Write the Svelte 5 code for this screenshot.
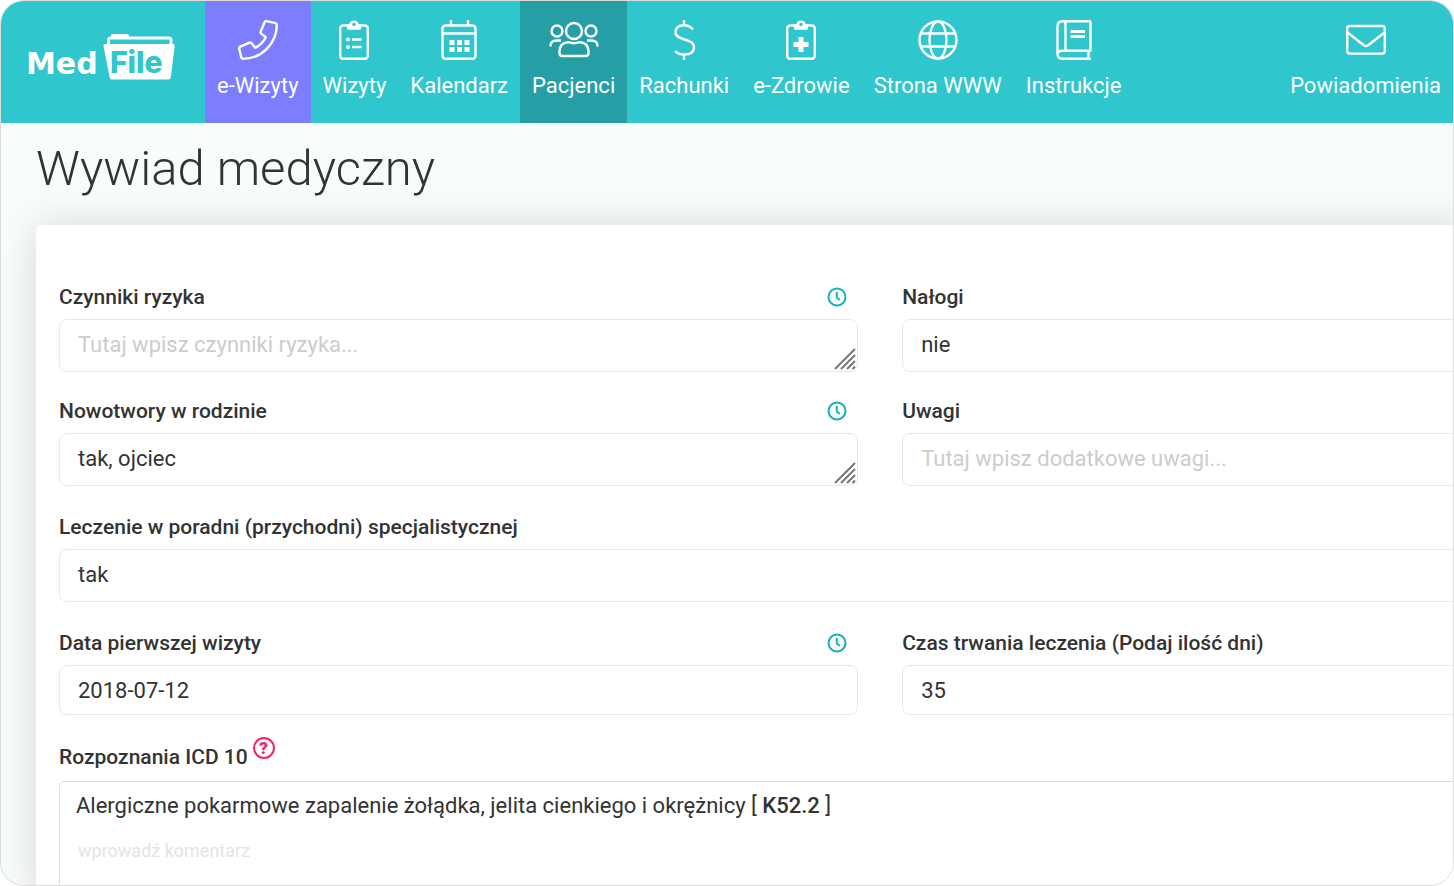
<script lang="ts">
	type IconName =
		| 'phone'
		| 'list'
		| 'calendar'
		| 'people'
		| 'dollar'
		| 'health'
		| 'globe'
		| 'book'
		| 'mail';

	interface NavItem {
		label: string;
		icon: IconName;
		width: number;
		variant?: 'call' | 'active' | 'last';
	}

	const navItems: NavItem[] = [
		{ label: 'e-Wizyty', icon: 'phone', width: 40, variant: 'call' },
		{ label: 'Wizyty', icon: 'list', width: 30 },
		{ label: 'Kalendarz', icon: 'calendar', width: 36 },
		{ label: 'Pacjenci', icon: 'people', width: 50, variant: 'active' },
		{ label: 'Rachunki', icon: 'dollar', width: 22 },
		{ label: 'e-Zdrowie', icon: 'health', width: 30 },
		{ label: 'Strona WWW', icon: 'globe', width: 40 },
		{ label: 'Instrukcje', icon: 'book', width: 36 },
		{ label: 'Powiadomienia', icon: 'mail', width: 40, variant: 'last' }
	];

	let riskFactors = $state('');
	let addictions = $state('nie');
	let familyCancer = $state('tak, ojciec');
	let remarks = $state('');
	let clinic = $state('tak');
	let firstVisit = $state('2018-07-12');
	let duration = $state('35');
	let comment = $state('');
</script>

{#snippet clipboard()}
	<rect x="1.2" y="5.5" width="27.6" height="33.3" rx="3" />
	<path class="solid" d="M8 4.5h2.200a4.900 4.900 0 0 1 9.600 0H22v3.700q0 1.600-1.600 1.600H9.600q-1.600 0-1.600-1.600z" />
	<circle class="hole" cx="15" cy="4.500" r="1.700" />
{/snippet}

{#snippet history(field: string)}
	<button type="button" class="history" aria-label={`Historia: ${field}`}>
		<svg viewBox="0 0 20 20" width="20" height="20" aria-hidden="true">
			<circle cx="10" cy="10" r="8.500" />
			<path d="M9.800 5v5.500l3 2.500" />
		</svg>
	</button>
{/snippet}

{#snippet grip()}
	<svg class="grip" viewBox="0 0 22 22" width="22" height="22" aria-hidden="true">
		<path d="M1 21 21 1M7 21 21 7M13 21l8-8M18.500 21l2.500-2.500" />
	</svg>
{/snippet}

<div class="window">
	<header class="topbar">
		<a class="logo" href="#start" aria-label="MedFile">
			<svg viewBox="0 0 150 56" width="150" height="56">
				<text class="med" x="-1" y="43">Med</text>
				<path class="folder-back" d="M81.500 14V9q0-2 2-2h58.500q2 0 2 2v5" />
				<path
					class="folder"
					d="M84 8V5q0-2 2-2h14q2 0 2 2v3zM78 13h68q2 0 1.700 2l-4 31.500q-.3 2-2.300 2H85q-2 0-2.300-2l-6.200-31.500q-.300-2 1.500-2z"
				/>
				<text class="file" x="83" y="42">File</text>
			</svg>
		</a>
		<nav aria-label="Menu główne">
			{#each navItems as item (item.label)}
				<a
					href={`#${item.icon}`}
					class={item.variant}
					aria-current={item.variant === 'active' ? 'page' : undefined}
				>
					<svg viewBox={`0 0 ${item.width} 40`} width={item.width} height="40" aria-hidden="true">
						{#if item.icon === 'phone'}
							<path
								d="M28.500 1.200l9 2q1.300.4 1.300 1.800c0 18.500-15.300 33.800-33.800 33.800q-1.400 0-1.800-1.400l-2-8.800q-.3-1.400 1-2l9.300-3.900q1.200-.5 2.100.5l3.700 4.600c4.700-2.300 8.200-5.800 10.500-10.500l-4.600-3.700q-1-.9-.5-2.100l3.900-9.300q.600-1.300 1.900-1z"
							/>
						{:else if item.icon === 'list'}
							{@render clipboard()}
							<path d="M13 19.500h9.500M13 27h9.500" />
							<circle class="solid" cx="9" cy="19.500" r="2" />
							<circle class="solid" cx="9" cy="27" r="2" />
						{:else if item.icon === 'calendar'}
							<rect x="1.500" y="5.500" width="33" height="33.300" rx="3" />
							<path d="M10 0v5M27 0v5M2 13.500h32" />
							<path
								class="solid"
								d="M8.500 20h5v5h-5zM16 20h5v5h-5zM23.500 20h5v5h-5zM8.500 27h5v5h-5zM16 27h5v5h-5zM23.500 27h5v5h-5z"
							/>
						{:else if item.icon === 'people'}
							<circle cx="25" cy="11" r="8" />
							<circle cx="8" cy="11" r="5.500" />
							<circle cx="42" cy="11" r="5.500" />
							<path d="M1.500 26.500v-.5q0-5.500 6-5.500h4.500M48.500 26.500v-.5q0-5.500-6-5.500H38" />
							<path
								d="M19.500 22.200q5.500 2 11 0 8.500 0 9 9v2q0 2.800-3 2.800h-23q-3 0-3-2.800v-2q.5-9 9-9z"
							/>
						{:else if item.icon === 'dollar'}
							<path
								d="M11 0v5M11 35v5M20 9.500q-3.500-4.300-9-4.300-8.500 0-8.500 7.300c0 8.500 18.500 5.500 18.500 14.500q0 7.500-9.500 7.500-6.500 0-9.500-3.500"
							/>
						{:else if item.icon === 'health'}
							{@render clipboard()}
							<path class="solid" d="M12.500 17h5v5h5v5h-5v5h-5v-5h-5v-5h5z" />
						{:else if item.icon === 'globe'}
							<circle cx="20" cy="20" r="18.500" />
							<ellipse cx="20" cy="20" rx="8.500" ry="18.500" />
							<path d="M2.500 13.500h35M2.500 26.500h35" />
						{:else if item.icon === 'book'}
							<path d="M35 1.200H6.500q-5 0-5 5v27.600q0 5 5 5H35M34.500 1.200v29.500H6.500q-5 0-5 4M9.500 1.200v29.500M32.500 31v7.500" />
							<path class="heavy" d="M14.500 11.500h14.500M14.500 16.500h14.500" />
						{:else}
							<rect x="1.200" y="6" width="37.600" height="27.600" rx="2.500" />
							<path d="M1.500 12.500 17.500 25q2.500 2 5 0l16-12.500" />
						{/if}
					</svg>
					<span>{item.label}</span>
				</a>
			{/each}
		</nav>
	</header>

	<main>
		<h1>Wywiad medyczny</h1>

		<form class="panel">
			<div class="row tight">
				<div class="field">
					<div class="caption">
						<label for="risk">Czynniki ryzyka</label>
						{@render history('Czynniki ryzyka')}
					</div>
					<div class="area">
						<textarea id="risk" rows="1" placeholder="Tutaj wpisz czynniki ryzyka..." bind:value={riskFactors}></textarea>
						{@render grip()}
					</div>
				</div>
				<div class="field">
					<div class="caption"><label for="addictions">Nałogi</label></div>
					<textarea id="addictions" rows="1" bind:value={addictions}></textarea>
				</div>
			</div>

			<div class="row">
				<div class="field">
					<div class="caption">
						<label for="cancer">Nowotwory w rodzinie</label>
						{@render history('Nowotwory w rodzinie')}
					</div>
					<div class="area">
						<textarea id="cancer" rows="1" bind:value={familyCancer}></textarea>
						{@render grip()}
					</div>
				</div>
				<div class="field">
					<div class="caption"><label for="remarks">Uwagi</label></div>
					<textarea id="remarks" rows="1" placeholder="Tutaj wpisz dodatkowe uwagi..." bind:value={remarks}></textarea>
				</div>
			</div>

			<div class="row wide">
				<div class="field">
					<div class="caption">
						<label for="clinic">Leczenie w poradni (przychodni) specjalistycznej</label>
					</div>
					<textarea id="clinic" rows="1" bind:value={clinic}></textarea>
				</div>
			</div>

			<div class="row">
				<div class="field">
					<div class="caption">
						<label for="first-visit">Data pierwszej wizyty</label>
						{@render history('Data pierwszej wizyty')}
					</div>
					<input id="first-visit" type="text" bind:value={firstVisit} />
				</div>
				<div class="field">
					<div class="caption">
						<label for="duration">Czas trwania leczenia (Podaj ilość dni)</label>
					</div>
					<input id="duration" type="text" bind:value={duration} />
				</div>
			</div>

			<div class="field">
				<div class="caption help">
					<label for="icd-comment">Rozpoznania ICD 10</label>
					<button type="button" class="hint" aria-label="Pomoc">?</button>
				</div>
				<div class="diagnosis">
					<p>Alergiczne pokarmowe zapalenie żołądka, jelita cienkiego i okrężnicy [ <b>K52.2</b> ]</p>
					<input id="icd-comment" type="text" placeholder="wprowadź komentarz" bind:value={comment} />
				</div>
			</div>
		</form>
	</main>
</div>

<style>
	:global(body) {
		background: #fff;
	}

	.window {
		box-sizing: border-box;
		height: 100vh;
		display: flex;
		flex-direction: column;
		overflow: hidden;
		border: 1px solid #dcdcdc;
		border-radius: 24px;
		background: #f8fcfd;
		color: #333;
		font-family: Roboto, sans-serif;
		font-size: 22px;
	}

	.topbar {
		flex: none;
		display: flex;
		background: #30c6ce;
	}

	.logo {
		display: block;
		padding: 30px 28px 0 26px;
	}

	.logo svg {
		display: block;
		overflow: visible;
	}

	.med,
	.folder {
		fill: #fff;
	}

	.med {
		font: 700 30px 'DejaVu Sans', sans-serif;
	}

	.file {
		fill: #30c6ce;
		font: 800 30px Inter, sans-serif;
	}

	.folder-back {
		fill: none;
		stroke: #fff;
		stroke-width: 3;
	}

	nav {
		flex: 1;
		display: flex;
	}

	nav a {
		display: flex;
		flex-direction: column;
		align-items: center;
		gap: 10px;
		padding: 19px 12px 22px;
		color: #fff;
		line-height: 31px;
		text-decoration: none;
		white-space: nowrap;
	}

	nav a.call {
		background: #7d7dff;
	}

	nav a.active {
		background: #269ea5;
	}

	nav a.last {
		margin-left: auto;
	}

	nav svg {
		fill: none;
		stroke: #fff;
		stroke-width: 2.4;
		stroke-linejoin: round;
	}

	nav svg .solid {
		fill: #fff;
		stroke: none;
	}

	nav svg .hole {
		fill: #30c6ce;
		stroke: none;
	}

	nav svg .heavy {
		stroke-width: 3;
	}

	main {
		flex: 1;
		min-height: 0;
		display: flex;
		flex-direction: column;
		padding-left: 35px;
	}

	h1 {
		margin: 0;
		padding: 14px 0 24px;
		font-size: 49px;
		font-weight: 300;
		line-height: 64px;
	}

	.panel {
		flex: 1 0 auto;
		margin-right: -20px;
		padding: 54px 0 0 23px;
		border-radius: 5px 0 0;
		background: #fff;
		box-shadow: 0 0 40px rgb(0 0 0 / 14%);
	}

	.row {
		min-height: 116px;
		display: grid;
		grid-template-columns: minmax(0, 7fr) minmax(0, 5fr);
		align-items: start;
		column-gap: 44px;
	}

	.row.tight {
		min-height: 114px;
	}

	.row.wide {
		grid-template-columns: minmax(0, 1fr);
	}

	.caption {
		height: 36px;
		display: flex;
		align-items: center;
		justify-content: space-between;
		margin-bottom: 4px;
		padding-right: 11px;
	}

	label {
		font-size: 21px;
		font-weight: 500;
		line-height: 36px;
	}

	button {
		padding: 0;
		background: none;
		cursor: pointer;
	}

	.history {
		width: 20px;
		height: 20px;
		border: 0;
	}

	.history svg {
		display: block;
		fill: none;
		stroke: #18b1b9;
		stroke-width: 2;
	}

	input,
	textarea {
		box-sizing: border-box;
		display: block;
		width: 100%;
		height: 53px;
		margin: 0;
		padding: 10px 18px 11px;
		border: 1px solid #e6e9ee;
		border-radius: 8px;
		outline: 0;
		background: #fff;
		color: #333;
		font: inherit;
		line-height: 30px;
		resize: none;
		overflow: hidden;
	}

	input {
		height: 50px;
		padding: 8px 18px;
	}

	::placeholder {
		color: #ccc;
		opacity: 1;
	}

	.area {
		position: relative;
	}

	.grip {
		position: absolute;
		right: 2px;
		bottom: 2px;
		stroke: #777;
		stroke-width: 2;
		pointer-events: none;
	}

	.help {
		height: 32px;
		justify-content: flex-start;
		gap: 5px;
		margin-bottom: 8px;
	}

	.hint {
		width: 22px;
		height: 22px;
		margin-bottom: 18px;
		border: 2px solid #f0246c;
		border-radius: 50%;
		color: #f0246c;
		font: 900 17px/18px Roboto, sans-serif;
	}

	.diagnosis {
		padding: 8px 16px 40px;
		border: 1px solid #ddd;
		border-radius: 5px;
	}

	.diagnosis p {
		margin: 0;
		line-height: 32px;
	}

	.diagnosis b {
		font-weight: 500;
	}

	.diagnosis input {
		height: 30px;
		margin-top: 14px;
		padding: 0 2px;
		border: 0;
		font-size: 18px;
	}

	.diagnosis input::placeholder {
		color: #e4e4e4;
	}
</style>
